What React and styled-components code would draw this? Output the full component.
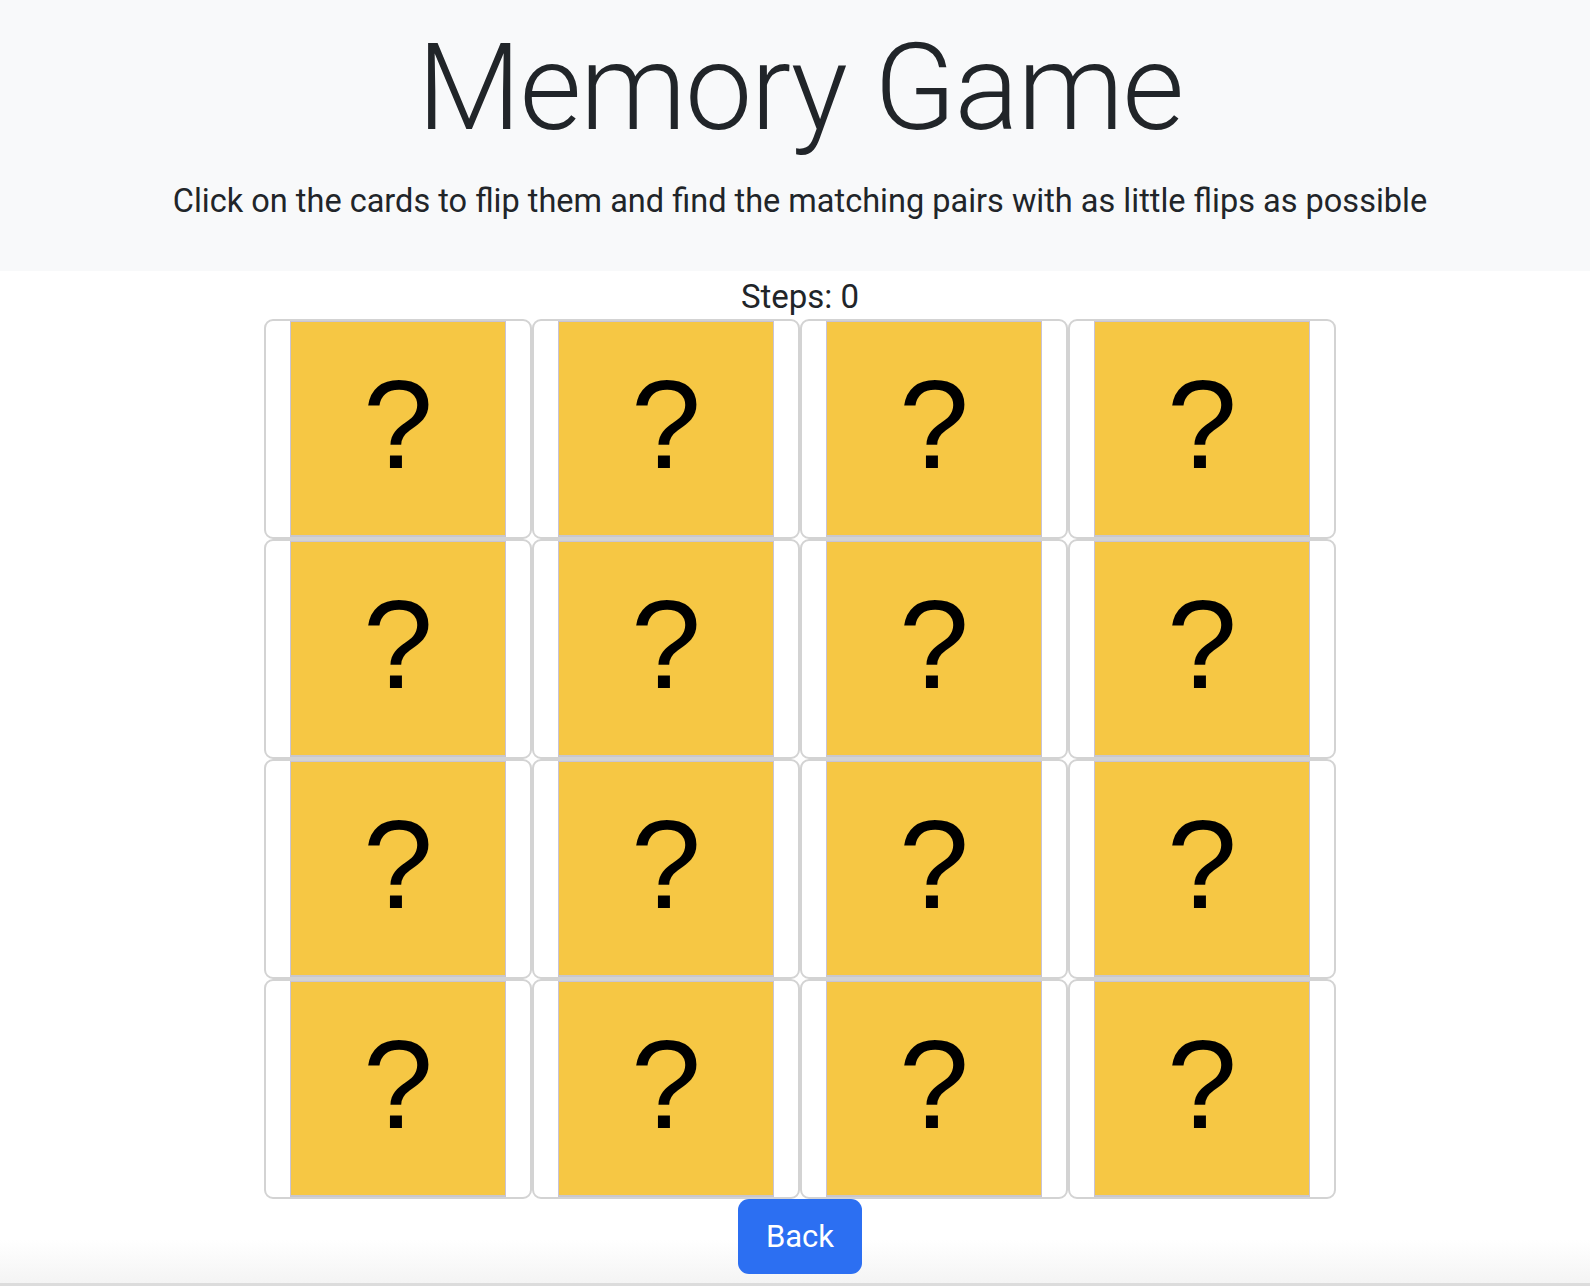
import React, { useState } from 'react';
import styled, { createGlobalStyle } from 'styled-components';

const GlobalStyle = createGlobalStyle`
  html, body {
    margin: 0;
    padding: 0;
    min-height: 100%;
  }
  body {
    font-family: Roboto, "Liberation Sans", sans-serif;
    color: #212529;
    min-height: 100vh;
    background: linear-gradient(
      to bottom,
      #ffffff calc(100% - 46px),
      #f4f4f4 calc(100% - 3px),
      #dcdcdc calc(100% - 3px)
    );
  }
`;

const Header = styled.header`
  background-color: #f8f9fa;
  height: 271px;
  padding-left: 10px;
  text-align: center;
  box-sizing: border-box;
  padding-top: 22px;
`;

const Title = styled.h1`
  margin: 0;
  font-size: 120px;
  font-weight: 300;
  line-height: 1.1;
  letter-spacing: -1.5px;
`;

const Lead = styled.p`
  margin: 26px 0 0;
  font-size: 32.5px;
  font-weight: 400;
  line-height: 1.3;
`;

const Main = styled.main`
  display: flex;
  flex-direction: column;
  align-items: center;
  padding-left: 10px;
`;

const Steps = styled.div`
  font-size: 33px;
  line-height: 44px;
  padding-top: 4px;
`;

const Board = styled.div`
  display: grid;
  grid-template-columns: repeat(4, 268px);
  grid-auto-rows: 220px;
`;

const Card = styled.div`
  border: 2px solid #d3d3d3;
  border-radius: 9px;
  background: #fff;
  display: flex;
  justify-content: center;
  cursor: pointer;
`;

const Face = styled.div`
  width: 216px;
  height: 216px;
  box-sizing: border-box;
  border: 1px solid #c8c3d6;
  border-bottom: 2px solid #c9c7cc;
  background-color: ${(p) => (p.$open ? '#ffffff' : '#f6c744')};
  display: flex;
  align-items: center;
  justify-content: center;
  font-family: "Liberation Sans", Arial, sans-serif;
  font-size: 126px;
  line-height: 1;
  color: #000;
  padding-bottom: 8px;
`;

const BackButton = styled.button`
  width: 124px;
  height: 75px;
  border: none;
  border-radius: 11px;
  background-color: #2c6ff2;
  color: #fff;
  font-family: Roboto, "Liberation Sans", sans-serif;
  font-size: 31px;
  cursor: pointer;
`;

const App = () => {
  const [steps] = useState(0);
  const cards = Array.from({ length: 16 }, (_, i) => i);

  return (
    <>
      <GlobalStyle />
      <Header>
        <Title>Memory Game</Title>
        <Lead>Click on the cards to flip them and find the matching pairs with as little flips as possible</Lead>
      </Header>
      <Main>
        <Steps>Steps: {steps}</Steps>
        <Board>
          {cards.map((c) => (
            <Card key={c}>
              <Face>?</Face>
            </Card>
          ))}
        </Board>
        <BackButton>Back</BackButton>
      </Main>
    </>
  );
};

export default App;
